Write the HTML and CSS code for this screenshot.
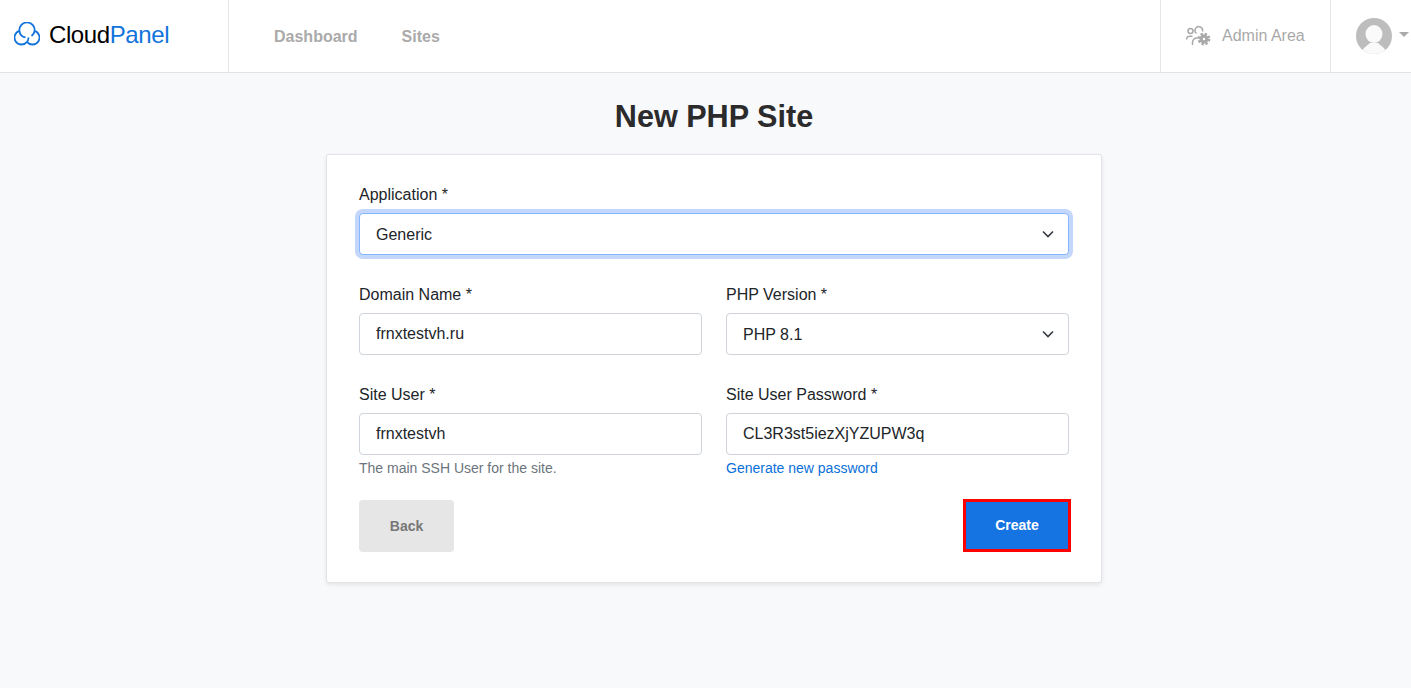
FILE: index.html
```html
<!DOCTYPE html>
<html lang="en">
<head>
<meta charset="utf-8">
<title>New PHP Site</title>
<link rel="stylesheet" href="styles.css">
</head>
<body>
<header class="topbar">
  <a class="brand">
    <svg class="brand-icon" viewBox="0 0 26 24" fill="none" stroke="#1173db" stroke-width="1.800">
      <path d="M5.440 8.810A7.600 7.600 0 1 1 20.560 8.810"/>
      <path d="M5.440 8.810A7 7 0 1 0 13 19.830"/>
      <path d="M20.560 8.810A7 7 0 1 1 13 19.830"/>
      <path d="M13 19.830A7 7 0 0 0 14.500 15.450"/>
      <path d="M5.440 8.810A7.600 7.600 0 0 0 11.500 15.450"/>
      <path d="M20.560 8.810A7.600 7.600 0 0 1 17.500 14"/>
    </svg>
    <span class="brand-text">Cloud<span class="brand-accent">Panel</span></span>
  </a>
  <nav class="nav">
    <a class="nav-link">Dashboard</a>
    <a class="nav-link">Sites</a>
  </nav>
  <a class="admin">
    <svg class="admin-icon" viewBox="0 0 28 22" fill="none" stroke="#a9a9a9" stroke-width="1.500">
      <circle cx="4.500" cy="6" r="2.500"/>
      <path d="M10.500 8.500A3.800 3.800 0 1 1 16.500 6.500"/>
      <path d="M0.500 14.500c0-2 1.500-3.200 3.500-3.200h2.500"/>
      <path d="M6.500 20v-2.500c0-2.700 2-4.500 4.500-4.500h1"/>
      <circle cx="18" cy="14" r="2.900" stroke-width="3.200"/>
      <circle cx="18" cy="14" r="5.200" stroke-width="2.400" stroke-dasharray="2.400 1.680"/>
    </svg>
    <span>Admin Area</span>
  </a>
  <div class="user">
    <svg class="avatar" viewBox="0 0 36 36">
      <defs><clipPath id="avatar-clip"><circle cx="18" cy="18" r="18"/></clipPath></defs>
      <circle cx="18" cy="18" r="18" fill="#bdbdbd"/>
      <g clip-path="url(#avatar-clip)" fill="#fafafa">
        <ellipse cx="18" cy="16" rx="8.500" ry="9"/>
        <path d="M5 36c1-6 6-8 9-11h8c3 3 8 5 9 11z"/>
      </g>
    </svg>
    <span class="caret"></span>
  </div>
</header>
<main class="page">
  <h1 class="title">New PHP Site</h1>
  <form class="card">
    <div class="field">
      <label class="label" for="app">Application *</label>
      <div class="select-wrap">
        <select id="app" class="control control-focus"><option>Generic</option></select>
        <svg class="chevron" viewBox="0 0 12 8"><path d="M1 1.500l5 5 5-5"/></svg>
      </div>
    </div>
    <div class="grid">
      <div class="field">
        <label class="label" for="domain">Domain Name *</label>
        <input id="domain" class="control" value="frnxtestvh.ru">
      </div>
      <div class="field">
        <label class="label" for="php">PHP Version *</label>
        <div class="select-wrap">
          <select id="php" class="control"><option>PHP 8.1</option></select>
          <svg class="chevron" viewBox="0 0 12 8"><path d="M1 1.500l5 5 5-5"/></svg>
        </div>
      </div>
      <div class="field">
        <label class="label" for="user">Site User *</label>
        <input id="user" class="control" value="frnxtestvh">
        <p class="hint">The main SSH User for the site.</p>
      </div>
      <div class="field">
        <label class="label" for="pass">Site User Password *</label>
        <input id="pass" class="control" value="CL3R3st5iezXjYZUPW3q">
        <a class="hint hint-link">Generate new password</a>
      </div>
    </div>
    <div class="actions">
      <button type="button" class="btn btn-back">Back</button>
      <button type="button" class="btn btn-create">Create</button>
    </div>
  </form>
</main>
</body>
</html>
```
FILE: styles.css
```css
* { box-sizing: border-box; }
html, body { margin: 0; height: 100%; }
body {
  background: #f8f9fb;
  color: #212529;
  font-family: "Liberation Sans", Arial, sans-serif;
  font-size: 16px;
  overflow: hidden;
}
.topbar {
  display: flex;
  align-items: stretch;
  height: 73px;
  background: #fff;
  border-bottom: 1px solid #e2e3e5;
}
.brand {
  display: flex;
  align-items: center;
  gap: 9px;
  width: 229px;
  padding-left: 14px;
  border-right: 1px solid #e6e6e6;
}
.brand-icon { width: 26px; height: 24px; margin-top: -4px; flex: none; }
.brand-text { font-size: 24px; color: #000; letter-spacing: -0.4px; margin-top: -2px; }
.brand-accent { color: #1173db; }
.nav {
  display: flex;
  align-items: center;
  gap: 44px;
  flex: 1;
  padding: 2px 0 0 45px;
}
.nav-link { font-weight: 700; font-size: 16px; color: #aaa; }
.admin {
  display: flex;
  align-items: center;
  gap: 8px;
  width: 171px;
  padding-left: 25px;
  border-left: 1px solid #e6e6e6;
  border-right: 1px solid #e6e6e6;
  color: #a9a9a9;
  font-size: 16px;
}
.admin-icon { width: 28px; height: 22px; flex: none; }
.user {
  display: flex;
  align-items: center;
  gap: 7px;
  width: 80px;
  padding-left: 25px;
}
.avatar { width: 36px; height: 36px; flex: none; }
.caret {
  width: 0;
  height: 0;
  border-left: 5px solid transparent;
  border-right: 5px solid transparent;
  border-top: 5px solid #aaa;
  margin-top: -4px;
}
.page { padding: 0 0 0 17px; }
.title {
  margin: 25px 0 19px;
  font-size: 30.6px;
  line-height: 37px;
  font-weight: 700;
  color: #2b2b2b;
  text-align: center;
}
.card {
  width: 776px;
  height: 429px;
  margin: 0 auto;
  padding: 29px 32px 0;
  background: #fff;
  border: 1px solid #e2e3e6;
  border-radius: 3px;
  box-shadow: 0 2px 4px rgba(0, 0, 0, .08);
}
.field { display: flex; flex-direction: column; align-items: stretch; min-width: 0; }
.label { display: block; height: 22px; line-height: 22px; margin-bottom: 7px; flex: none; }
.grid {
  display: grid;
  grid-template-columns: 343px 343px;
  column-gap: 24px;
  grid-template-rows: 100px 116px;
  margin-top: 29px;
}
.select-wrap { position: relative; flex: none; }
.control {
  display: block;
  flex: none;
  width: 100%;
  height: 42px;
  padding: 0 16px;
  background: #fff;
  border: 1px solid #ced4da;
  border-radius: 4px;
  color: #212529;
  font: 16px "Liberation Sans", Arial, sans-serif;
  appearance: none;
  outline: none;
}
.control-focus {
  border-color: #86b7fe;
  box-shadow: 0 0 0 4px #c3d6fb;
}
.chevron {
  position: absolute;
  right: 15px;
  top: 17px;
  width: 12px;
  height: 8px;
  fill: none;
  stroke: #343a40;
  stroke-width: 1.600;
  pointer-events: none;
}
.hint {
  display: block;
  margin: 5px 0 0;
  font-size: 14px;
  line-height: 17px;
  color: #6c757d;
}
.hint-link { color: #0a6fd8; }
.actions {
  display: flex;
  justify-content: space-between;
  align-items: flex-start;
}
.btn {
  height: 52px;
  border: 0;
  border-radius: 4px;
  font: 700 14px "Liberation Sans", Arial, sans-serif;
}
.btn-back { width: 95px; background: #e6e6e6; color: #777; }
.btn-create {
  width: 108px;
  height: 53px;
  margin: -1px -2px 0 0;
  padding-bottom: 2px;
  border: 3px solid #f00;
  border-radius: 0;
  background: #1673e2;
  color: #fff;
}
```
